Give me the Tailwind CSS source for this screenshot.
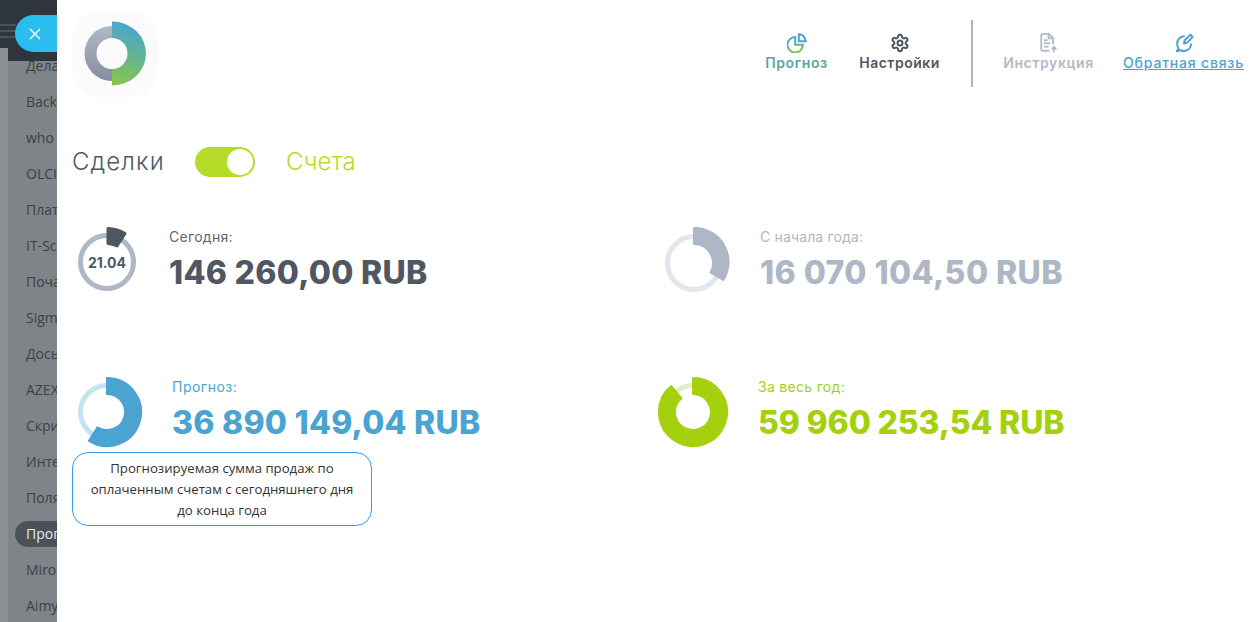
<!DOCTYPE html>
<html lang="ru">
<head>
  <meta charset="UTF-8" />
  <title>Прогноз</title>
  <script src="https://cdn.jsdelivr.net/npm/@tailwindcss/browser@4"></script>
</head>
<body class="h-[622px] overflow-hidden bg-white font-['Inter',sans-serif]">
<div class="relative flex h-[622px] w-[1257px] overflow-hidden">

  <!-- SIDEBAR BEHIND -->
  <aside class="flex h-full w-[57px] shrink-0 flex-col overflow-hidden bg-[#7f8488] font-['Open_Sans',sans-serif] text-[14px] text-[#3c4147]">
    <div class="flex h-[61px] shrink-0 flex-col justify-center gap-[4px] bg-[#2f353d]">
      <span class="h-[2px] w-[16px] bg-[#4c5259]"></span>
      <span class="h-[2px] w-[16px] bg-[#4c5259]"></span>
      <span class="h-[2px] w-[16px] bg-[#4c5259]"></span>
    </div>
    <ul class="-mt-[13px] border-l-[8px] border-[#8e9193] pl-[18px] leading-[36px] whitespace-nowrap">
      <li>Дела</li><li>Back</li><li>who</li><li>OLCI</li><li>Плат</li><li>IT-Sc</li><li>Поча</li><li>Sigm</li>
      <li>Дось</li><li>AZEX</li><li>Скри</li><li>Инте</li><li>Поля</li>
      <li class="-ml-[11px] my-[5px] h-[26px] rounded-l-full bg-[#4b5159] pl-[11px] leading-[26px] text-[#e6e7e9]">Прог</li>
      <li>Miro</li><li>Aimy</li>
    </ul>
  </aside>

  <!-- CLOSE BUTTON -->
  <div class="absolute left-[15px] top-[15px] flex h-[37px] w-[42px] items-center rounded-l-full bg-[#2bbcf0] pl-[14px]">
    <svg width="12" height="12" viewBox="0 0 12 12" fill="none" stroke="#e8f8fe" stroke-width="1.6"><path d="M1 1l10 10M11 1L1 11"/></svg>
  </div>

  <!-- PANEL -->
  <main class="min-w-0 flex-1 bg-white pl-[15px]">
    <header class="flex h-[107px] items-start justify-between pt-[10px]">
      <div class="flex h-[87px] w-[86px] items-center justify-center rounded-[28px] bg-[#fbfbfb]">
        <svg width="70" height="70" viewBox="0 0 70 70">
          <defs>
            <linearGradient id="lg" x1="0" y1="0" x2="0" y2="1"><stop offset="0" stop-color="#b2bac9"/><stop offset="1" stop-color="#858c9e"/></linearGradient>
            <linearGradient id="lc" x1="0.5" y1="0" x2="0.3" y2="1"><stop offset="0" stop-color="#45a3d6"/><stop offset="1" stop-color="#86c54a"/></linearGradient>
          </defs>
          <path d="M32 7A27.500 27.500 0 0 0 32 62V50A15.500 15.500 0 0 1 32 19Z" fill="url(#lg)"/>
          <path d="M32 2.500A34 32 0 0 1 32 66.500V50A15.500 15.500 0 0 0 32 19Z" fill="url(#lc)"/>
        </svg>
      </div>
      <nav class="flex items-start pt-[10px] pr-[14px] text-[14px] font-semibold tracking-[0.5px] whitespace-nowrap">
        <a class="flex w-[63px] flex-col items-center pt-[13px] tracking-[0.6px] text-[#5aa89c]">
          <svg width="20" height="20" viewBox="0 0 22 22" fill="none" stroke-width="2.200">
            <defs><linearGradient id="pie" x1="0" y1="0" x2="0" y2="1"><stop offset="0" stop-color="#45a3d6"/><stop offset="1" stop-color="#86c54a"/></linearGradient></defs>
            <path d="M9 4.500A8.500 8.500 0 1 0 17.500 13H9Z" stroke="url(#pie)"/><path d="M13 1.500a7.500 7.500 0 0 1 7.500 7.500H13Z" stroke="#45a3d6"/>
          </svg>
          <span class="mt-[1px] leading-[18px]">Прогноз</span>
        </a>
        <a class="ml-[31px] flex w-[81px] flex-col items-center pt-[13px] text-[#4f5763]">
          <svg width="20" height="20" viewBox="0 0 24 24" fill="none" stroke="#4f5763" stroke-width="2.400" stroke-linecap="round" stroke-linejoin="round">
            <path d="M12.200 2h-.4a2 2 0 0 0-2 2v.2a2 2 0 0 1-1 1.700l-.4.300a2 2 0 0 1-2 0l-.2-.1a2 2 0 0 0-2.700.7l-.2.400a2 2 0 0 0 .7 2.700l.2.100a2 2 0 0 1 1 1.700v.5a2 2 0 0 1-1 1.700l-.2.100a2 2 0 0 0-.7 2.700l.2.400a2 2 0 0 0 2.700.7l.2-.1a2 2 0 0 1 2 0l.4.300a2 2 0 0 1 1 1.700v.2a2 2 0 0 0 2 2h.4a2 2 0 0 0 2-2v-.2a2 2 0 0 1 1-1.700l.4-.300a2 2 0 0 1 2 0l.2.100a2 2 0 0 0 2.700-.7l.2-.4a2 2 0 0 0-.7-2.700l-.2-.1a2 2 0 0 1-1-1.700v-.5a2 2 0 0 1 1-1.700l.2-.1a2 2 0 0 0 .7-2.700l-.2-.4a2 2 0 0 0-2.700-.7l-.2.100a2 2 0 0 1-2 0l-.4-.300a2 2 0 0 1-1-1.700V4a2 2 0 0 0-2-2Z"/><circle cx="12" cy="12" r="3"/>
          </svg>
          <span class="mt-[1px] leading-[18px]">Настройки</span>
        </a>
        <span class="ml-[31px] mr-[30px] h-[67px] w-[2px] bg-[#aab4c3]"></span>
        <a class="flex w-[91px] flex-col items-center pt-[13px] tracking-[0.6px] text-[#b2bac8]">
          <svg width="19" height="20" viewBox="0 0 20 22" fill="none" stroke="#b2bac8" stroke-width="2" stroke-linejoin="round">
            <path d="M11 19.500H4a2 2 0 0 1-2-2V3a2 2 0 0 1 2-2h6.500L15 5.500V12"/><path d="M10 1v5h5M5 8h4M5 11.500h7M5 15h5"/><path d="M16 21.500v-5.500M13.500 18l2.500-3 2.500 3" stroke-width="1.800"/>
          </svg>
          <span class="mt-[1px] leading-[18px]">Инструкция</span>
        </a>
        <a class="ml-[30px] flex w-[119px] flex-col items-center pt-[13px] font-medium tracking-[0.8px] text-[#4ba3d2] underline">
          <svg width="20" height="20" viewBox="0 0 22 22" fill="none" stroke="#4ba3d2" stroke-width="2.200" stroke-linecap="round" stroke-linejoin="round">
            <path d="M11 3.500A8 8 0 0 0 3.500 12c0 2 .7 3.600 1.500 5l-2 3.200 4.500-1.200a8 8 0 0 0 4 .8 8 8 0 0 0 7.300-7.500"/><path d="M11 11.500l.8-3.500L18 1.800l2.500 2.500-6 6.300Z"/>
          </svg>
          <span class="mt-[1px] leading-[18px]">Обратная связь</span>
        </a>
      </nav>
    </header>

    <!-- TOGGLE -->
    <div class="mt-[40px] flex h-[30px] items-center text-[24px] font-light">
      <span class="w-[92px] tracking-[1.100px] text-[#4f5763]">Сделки</span>
      <span class="ml-[31px] flex h-[30px] w-[60px] items-center justify-end rounded-full bg-[#b5dc28] pr-[2px]"><span class="h-[26px] w-[26px] rounded-full bg-white"></span></span>
      <span class="ml-[31px] tracking-[0.200px] text-[#b5dc28]">Счета</span>
    </div>

    <!-- STATS -->
    <section class="mt-[50px] grid grid-cols-[586px_1fr] grid-rows-[150px_150px]">
      <div class="flex items-start">
        <svg width="72" height="72" viewBox="0 0 72 72" class="shrink-0">
          <circle cx="35" cy="35" r="26.500" fill="none" stroke="#aeb7c6" stroke-width="5"/>
          <path d="M36 1.500A33.500 33.500 0 0 1 53 6.500L45 19A19 19 0 0 0 36 16.500Z" fill="#4f5763" stroke="#4f5763" stroke-width="3" stroke-linejoin="round"/>
          <text x="35" y="40.500" text-anchor="middle" font-size="14" font-weight="700" fill="#4f5763">21.04</text>
        </svg>
        <div class="ml-[25px] text-[#4f5763]">
          <p class="mt-[2px] text-[14px] leading-[16px] tracking-[0.3px] text-[#5f6772]">Сегодня:</p>
          <p class="mt-[8px] text-[32px] font-extrabold leading-[40px] tracking-[0.3px]">146 260,00 RUB</p>
        </div>
      </div>
      <div class="flex items-start">
        <svg width="72" height="72" viewBox="0 0 72 72" class="shrink-0">
          <circle cx="36" cy="36" r="26.500" fill="none" stroke="#e3e6ec" stroke-width="5"/>
          <path d="M36 1A34 34 0 0 1 65.400 53L52.500 45.500A19 19 0 0 0 36 17Z" fill="#adb7c6" stroke="#adb7c6" stroke-width="2" stroke-linejoin="round"/>
        </svg>
        <div class="ml-[30px] text-[#adb7c6]">
          <p class="mt-[2px] text-[14px] leading-[16px] tracking-[0.15px]">С начала года:</p>
          <p class="mt-[8px] text-[32px] font-extrabold leading-[40px] tracking-[0.45px]">16 070 104,50 RUB</p>
        </div>
      </div>
      <div class="relative flex items-start">
        <svg width="72" height="72" viewBox="0 0 72 72" class="shrink-0">
          <circle cx="35" cy="35" r="26.500" fill="none" stroke="#c5e3f1" stroke-width="5"/>
          <path d="M35 1A34 34 0 1 1 17 63.800L25.500 50.300A18 18 0 1 0 35 17Z" fill="#4ba3d2" stroke="#4ba3d2" stroke-width="2" stroke-linejoin="round"/>
        </svg>
        <div class="ml-[28px] text-[#4ba3d2]">
          <p class="mt-[2px] text-[14px] leading-[16px] tracking-[0.5px]">Прогноз:</p>
          <p class="mt-[8px] text-[32px] font-extrabold leading-[40px] tracking-[0.25px]">36 890 149,04 RUB</p>
        </div>
        <div class="absolute left-0 top-[75px] w-[300px] rounded-[16px] border border-[#2f9cf0] bg-white px-[14px] py-[4.500px] text-center font-['Open_Sans',sans-serif] text-[13.200px] leading-[21px] text-[#333]">
          Прогнозируемая сумма продаж по оплаченным счетам с сегодняшнего дня до конца года
        </div>
      </div>
      <div class="flex items-start">
        <svg width="72" height="72" viewBox="0 0 72 72" class="shrink-0">
          <circle cx="35" cy="35" r="26.500" fill="none" stroke="#e3ecd0" stroke-width="5"/>
          <path d="M35 1A34 34 0 1 1 13.100 9L23.400 21.200A18 18 0 1 0 35 17Z" fill="#a5d00e" stroke="#a5d00e" stroke-width="2" stroke-linejoin="round"/>
        </svg>
        <div class="ml-[28px] text-[#a5d00e]">
          <p class="mt-[2px] text-[14px] leading-[16px] tracking-[0.3px]">За весь год:</p>
          <p class="mt-[8px] text-[32px] font-extrabold leading-[40px] tracking-[-0.15px]">59 960 253,54 RUB</p>
        </div>
      </div>
    </section>
  </main>
</div>
</body>
</html>
